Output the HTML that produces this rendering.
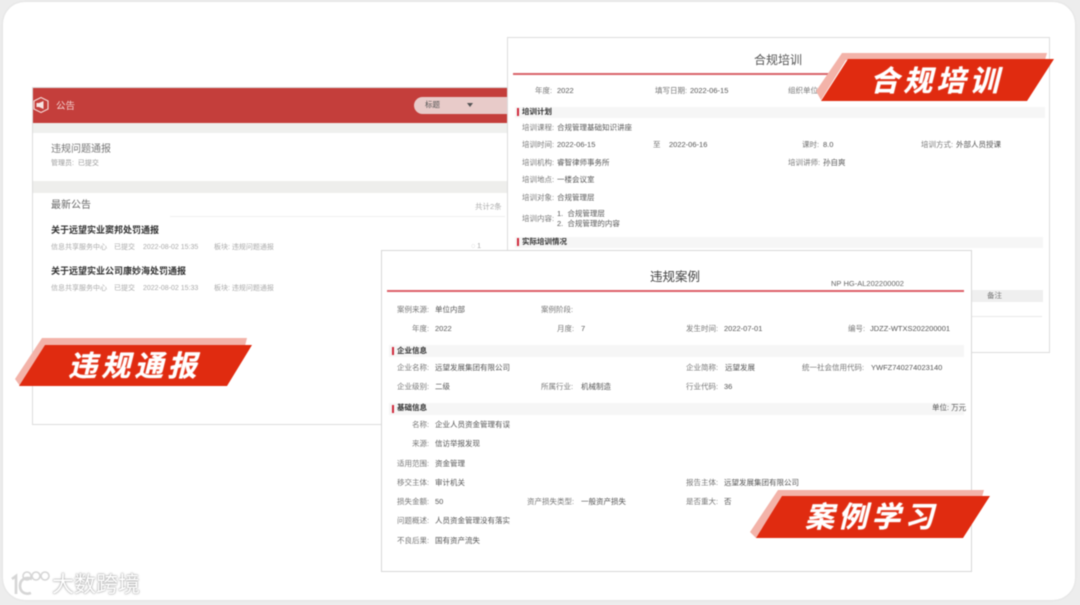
<!DOCTYPE html>
<html lang="zh">
<head>
<meta charset="utf-8">
<style>
html,body{margin:0;padding:0;width:1080px;height:605px;overflow:hidden;background:#ececec;}
body{font-family:"Liberation Sans","Noto Sans CJK SC",sans-serif;}
#wrap{position:absolute;left:0;top:0;width:1080px;height:605px;overflow:hidden;background:#ededed;filter:blur(.6px);}
#card{position:absolute;left:3px;top:2px;width:1072px;height:598px;background:#fff;border-radius:22px;box-shadow:0 0 2px #d8d8d8;}
.p{position:absolute;background:#fff;border:1px solid #dcdcdc;box-sizing:border-box;}
.abs{position:absolute;}
.t{position:absolute;white-space:nowrap;font-size:7.5px;line-height:12px;color:#777;margin-top:1px;}
.v{color:#555;}
.s{color:#333;font-weight:bold;}
.band{position:absolute;background:#f6f6f6;}
.bar{position:absolute;width:2px;height:8px;background:#d0283a;}
.bn{position:absolute;white-space:nowrap;color:#fff;font-weight:bold;font-style:italic;font-size:29px;line-height:40px;letter-spacing:4.2px;text-shadow:0 0 1px #fff;margin-top:1px;}
</style>
</head>
<body>
<div id="wrap">
<div id="card"></div>

<!-- Panel A: notices -->
<div class="p" style="left:32px;top:87px;width:490px;height:338px;"></div>
<div class="abs" style="left:33px;top:88px;width:480px;height:35px;background:#c43e3b;"></div>
<div class="band" style="left:33px;top:123px;width:480px;height:10px;background:#eff0ee;"></div>
<div class="band" style="left:33px;top:181px;width:480px;height:12px;background:#eeeeec;"></div>
<svg class="abs" style="left:33px;top:96px" width="17" height="18" viewBox="0 0 17 18"><path d="M8 1.5L15 5v8l-7 3.5L1 13V5z" fill="none" stroke="#f3d5d3" stroke-width="1.2"/><path d="M10.5 5v8L6 11H3.5V7H6z" fill="#f6e4e2"/></svg>
<div class="t" style="left:56px;top:100px;font-size:9.5px;line-height:14px;color:#f3d0ce;margin-top:0;">公告</div>
<div class="abs" style="left:414px;top:97px;width:100px;height:17px;border-radius:9px 0 0 9px;background:#e8cbc9;"></div>
<div class="t" style="left:425px;top:98px;color:#555;">标题</div>
<svg class="abs" style="left:467px;top:103px" width="7" height="5"><path d="M0 0h6L3 4z" fill="#555"/></svg>
<div class="t" style="left:51px;top:141px;font-size:10px;line-height:16px;color:#777;">违规问题通报</div>
<div class="t" style="left:51px;top:157px;font-size:7px;line-height:11px;color:#999;">管理员:&nbsp;&nbsp;已提交</div>
<div class="t" style="left:51px;top:198px;font-size:10px;line-height:16px;color:#666;margin-top:0;">最新公告</div>
<div class="t" style="left:475px;top:200px;color:#aaa;">共计2条</div>
<div class="abs" style="left:170px;top:216px;width:335px;height:1px;background:#f0f0f0;"></div>
<div class="t s" style="left:51px;top:222px;font-size:9px;line-height:14px;">关于远望实业窦邦处罚通报</div>
<div class="t" style="left:51px;top:241px;font-size:7px;color:#aaa;">信息共享服务中心</div>
<div class="t" style="left:114px;top:241px;font-size:7px;color:#aaa;">已提交</div>
<div class="t" style="left:143px;top:241px;font-size:7px;color:#aaa;">2022-08-02 15:35</div>
<div class="t" style="left:214px;top:241px;font-size:7px;color:#aaa;">板块:&nbsp;违规问题通报</div>
<div class="t" style="left:471px;top:240px;font-size:7px;color:#aaa;">&#9676; 1</div>
<div class="t s" style="left:51px;top:263px;font-size:9px;line-height:14px;">关于远望实业公司康妙海处罚通报</div>
<div class="t" style="left:51px;top:282px;font-size:7px;color:#aaa;">信息共享服务中心</div>
<div class="t" style="left:114px;top:282px;font-size:7px;color:#aaa;">已提交</div>
<div class="t" style="left:143px;top:282px;font-size:7px;color:#aaa;">2022-08-02 15:33</div>
<div class="t" style="left:214px;top:282px;font-size:7px;color:#aaa;">板块:&nbsp;违规问题通报</div>

<!-- Panel B: training -->
<div class="p" style="left:507px;top:37px;width:543px;height:316px;"></div>
<div class="t" style="left:754px;top:51px;font-size:12px;line-height:16px;color:#555;">合规培训</div>
<div class="abs" style="left:513px;top:73px;width:320px;height:2px;background:#d9636a;"></div>
<div class="t" style="left:535px;top:84px;">年度:</div><div class="t v" style="left:557px;top:84px;">2022</div>
<div class="t" style="left:655px;top:84px;">填写日期:</div><div class="t v" style="left:690px;top:84px;">2022-06-15</div>
<div class="t" style="left:788px;top:84px;">组织单位:</div>
<div class="band" style="left:515px;top:107px;width:530px;height:11px;"></div>
<div class="bar" style="left:517px;top:108px;"></div>
<div class="t s" style="left:522px;top:105px;">培训计划</div>
<div class="t" style="left:522px;top:121px;">培训课程:</div><div class="t v" style="left:557px;top:121px;">合规管理基础知识讲座</div>
<div class="t" style="left:522px;top:138px;">培训时间:</div><div class="t v" style="left:557px;top:138px;">2022-06-15</div>
<div class="t" style="left:653px;top:138px;">至</div><div class="t v" style="left:669px;top:138px;">2022-06-16</div>
<div class="t" style="left:802px;top:138px;">课时:</div><div class="t v" style="left:823px;top:138px;">8.0</div>
<div class="t" style="left:921px;top:138px;">培训方式:</div><div class="t v" style="left:956px;top:138px;">外部人员授课</div>
<div class="t" style="left:522px;top:156px;">培训机构:</div><div class="t v" style="left:557px;top:156px;">睿智律师事务所</div>
<div class="t" style="left:788px;top:156px;">培训讲师:</div><div class="t v" style="left:823px;top:156px;">孙自爽</div>
<div class="t" style="left:522px;top:173px;">培训地点:</div><div class="t v" style="left:557px;top:173px;">一楼会议室</div>
<div class="t" style="left:522px;top:191px;">培训对象:</div><div class="t v" style="left:557px;top:191px;">合规管理层</div>
<div class="t" style="left:522px;top:212px;">培训内容:</div>
<div class="t v" style="left:557px;top:207px;">1.&nbsp;&nbsp;合规管理层</div>
<div class="t v" style="left:557px;top:217px;">2.&nbsp;&nbsp;合规管理的内容</div>
<div class="band" style="left:515px;top:237px;width:528px;height:11px;"></div>
<div class="bar" style="left:517px;top:238px;"></div>
<div class="t s" style="left:522px;top:235px;">实际培训情况</div>
<div class="band" style="left:800px;top:290px;width:243px;height:12px;background:#efefef;"></div>
<div class="t" style="left:987px;top:289px;">备注</div>
<div class="abs" style="left:960px;top:316px;width:82px;height:1px;background:#e8e8e8;"></div>

<!-- Panel C: case -->
<div class="p" style="left:381px;top:250px;width:591px;height:322px;border-color:#d8d8d8;"></div>
<div class="t" style="left:650px;top:268px;font-size:12.5px;line-height:17px;color:#444;">违规案例</div>
<div class="t" style="left:831px;top:277px;color:#666;">NP&nbsp;HG-AL202200002</div>
<div class="abs" style="left:387px;top:290px;width:577px;height:2px;background:#dc6068;"></div>

<div class="t" style="left:397px;top:303px;">案例来源:</div><div class="t v" style="left:435px;top:303px;">单位内部</div>
<div class="t" style="left:541px;top:303px;">案例阶段:</div>
<div class="t" style="left:412px;top:322px;">年度:</div><div class="t v" style="left:435px;top:322px;">2022</div>
<div class="t" style="left:557px;top:322px;">月度:</div><div class="t v" style="left:581px;top:322px;">7</div>
<div class="t" style="left:686px;top:322px;">发生时间:</div><div class="t v" style="left:724px;top:322px;">2022-07-01</div>
<div class="t" style="left:848px;top:322px;">编号:</div><div class="t v" style="left:870px;top:322px;">JDZZ-WTXS202200001</div>

<div class="band" style="left:389px;top:345px;width:575px;height:12px;"></div>
<div class="bar" style="left:392px;top:347px;"></div>
<div class="t s" style="left:397px;top:344px;">企业信息</div>
<div class="t" style="left:397px;top:361px;">企业名称:</div><div class="t v" style="left:435px;top:361px;">远望发展集团有限公司</div>
<div class="t" style="left:686px;top:361px;">企业简称:</div><div class="t v" style="left:725px;top:361px;">远望发展</div>
<div class="t" style="left:802px;top:361px;">统一社会信用代码:</div><div class="t v" style="left:871px;top:361px;">YWFZ740274023140</div>
<div class="t" style="left:397px;top:380px;">企业级别:</div><div class="t v" style="left:435px;top:380px;">二级</div>
<div class="t" style="left:541px;top:380px;">所属行业:</div><div class="t v" style="left:581px;top:380px;">机械制造</div>
<div class="t" style="left:686px;top:380px;">行业代码:</div><div class="t v" style="left:724px;top:380px;">36</div>

<div class="band" style="left:389px;top:403px;width:575px;height:12px;"></div>
<div class="bar" style="left:392px;top:405px;"></div>
<div class="t s" style="left:397px;top:401px;">基础信息</div>
<div class="t v" style="left:932px;top:401px;">单位:&nbsp;万元</div>
<div class="t" style="left:412px;top:418px;">名称:</div><div class="t v" style="left:435px;top:418px;">企业人员资金管理有误</div>
<div class="t" style="left:412px;top:437px;">来源:</div><div class="t v" style="left:435px;top:437px;">信访举报发现</div>
<div class="t" style="left:397px;top:457px;">适用范围:</div><div class="t v" style="left:435px;top:457px;">资金管理</div>
<div class="t" style="left:397px;top:476px;">移交主体:</div><div class="t v" style="left:435px;top:476px;">审计机关</div>
<div class="t" style="left:686px;top:476px;">报告主体:</div><div class="t v" style="left:724px;top:476px;">远望发展集团有限公司</div>
<div class="t" style="left:397px;top:495px;">损失金额:</div><div class="t v" style="left:435px;top:495px;">50</div>
<div class="t" style="left:527px;top:495px;">资产损失类型:</div><div class="t v" style="left:581px;top:495px;">一般资产损失</div>
<div class="t" style="left:686px;top:495px;">是否重大:</div><div class="t v" style="left:724px;top:495px;">否</div>
<div class="t" style="left:397px;top:514px;">问题概述:</div><div class="t v" style="left:435px;top:514px;">人员资金管理没有落实</div>
<div class="t" style="left:397px;top:534px;">不良后果:</div><div class="t v" style="left:435px;top:534px;">国有资产流失</div>

<!-- Banners -->
<svg class="abs" style="left:0;top:0" width="1080" height="605" viewBox="0 0 1080 605">
<polygon points="15,379 42,338 247,338 245,346 45,346 20,386" fill="#f3b3a9"/>
<polygon points="19,386 45,345 252,345 227,386" fill="#e02b10"/>
<polygon points="816,91 842,53 1047,53 1045,60 846,60 821,100" fill="#f3b3a9"/>
<polygon points="821,101 848,59 1054,59 1027,101" fill="#e02b10"/>
<polygon points="750,532 778,490 984,490 982,497 782,497 756,538" fill="#f3b3a9"/>
<polygon points="756,538 782,496 990,496 963,538" fill="#e02b10"/>
</svg>
<div class="bn" style="left:68px;top:346px;">违规通报</div>
<div class="bn" style="left:870px;top:61px;">合规培训</div>
<div class="bn" style="left:805px;top:497px;">案例学习</div>

<!-- Watermark -->
<svg class="abs" style="left:8px;top:568px" width="44" height="30" viewBox="0 0 44 30" fill="none">
<path d="M4 11l4-3v18" stroke="#d6d6d6" stroke-width="2.6"/>
<path d="M24 11c-7-3-12 1-12 7s5 9 11 7" stroke="#d6d6d6" stroke-width="2.6"/>
<circle cx="19" cy="8" r="4" stroke="#d6d6d6" stroke-width="1.6"/>
<circle cx="28" cy="8" r="4" stroke="#d6d6d6" stroke-width="1.6"/>
<circle cx="37" cy="8" r="4" stroke="#d6d6d6" stroke-width="1.6"/>
</svg>
<div class="t" style="left:52px;top:573px;font-size:22px;line-height:24px;color:#fff;text-shadow:0 0 2px #999,0 0 1px #999;margin-top:0;">大数跨境</div>
</div>
</body>
</html>
